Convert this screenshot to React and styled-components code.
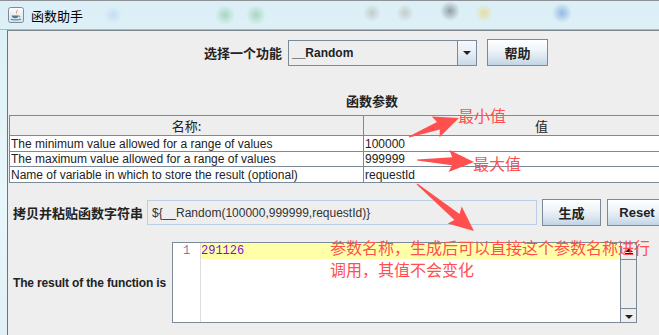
import React from 'react';
import styled, { createGlobalStyle } from 'styled-components';

const GlobalStyle = createGlobalStyle`
  html, body {
    margin: 0;
    padding: 0;
    background: #eeeeee;
  }
  * {
    box-sizing: border-box;
  }
`;

const ui = `"Liberation Sans", "Noto Sans CJK SC", Arial, sans-serif`;
const cjk = `"Noto Sans CJK SC", "Liberation Sans", sans-serif`;
const red = '#ff4f4f';
const lineColor = '#7a8a99';

const Frame = styled.div`
  position: relative;
  width: 659px;
  height: 335px;
  overflow: hidden;
  border-top: 1px solid #8c9296;
  background:
    radial-gradient(circle at 113px 14px, rgba(120, 170, 230, 0.25) 0, transparent 9px),
    radial-gradient(circle at 225px 14px, rgba(60, 170, 90, 0.35) 0, transparent 10px),
    radial-gradient(circle at 256px 14px, rgba(60, 170, 90, 0.35) 0, transparent 10px),
    radial-gradient(circle at 372px 12px, rgba(140, 140, 120, 0.35) 0, transparent 9px),
    radial-gradient(circle at 405px 12px, rgba(150, 140, 120, 0.35) 0, transparent 9px),
    radial-gradient(circle at 450px 10px, rgba(60, 60, 70, 0.45) 0, transparent 10px),
    radial-gradient(circle at 484px 12px, rgba(240, 200, 60, 0.45) 0, transparent 9px),
    radial-gradient(circle at 562px 12px, rgba(60, 120, 210, 0.45) 0, transparent 10px),
    linear-gradient(180deg, #dceff6 0%, #e8f7fb 60%, #e2f0f5 100%);
`;

const TitleBar = styled.div`
  height: 29px;
  display: flex;
  align-items: center;
  gap: 7px;
  padding: 0 0 0 8px;
  border-bottom: 1px solid #a6b8c4;
`;

const TitleText = styled.span`
  font-family: ${cjk};
  font-size: 13px;
  color: #000;
`;

const Body = styled.div`
  margin-left: 7px;
  width: 733px;
  height: 306px;
  background: #eeeeee;
  border-left: 1px solid #6f7478;
  border-top: 1px solid #80898f;
  display: flex;
  flex-direction: column;
`;

const ComboRow = styled.div`
  margin-top: 8px;
  padding-left: 4px;
  display: flex;
  align-items: center;
  justify-content: center;
`;

const BoldLabel = styled.span`
  font-family: ${cjk};
  font-weight: 700;
  font-size: 13px;
  color: #222;
  white-space: nowrap;
  width: ${(p) => (p.$w ? `${p.$w}px` : 'auto')};
`;

const Combo = styled.div`
  margin-left: 6px;
  width: 189px;
  height: 26px;
  display: flex;
  border: 1px solid ${lineColor};
  background: #eeeeee;
`;

const ComboValue = styled.div`
  flex: 1;
  padding-left: 3px;
  display: flex;
  align-items: center;
  font-family: ${ui};
  font-weight: 700;
  font-size: 12px;
  color: #222;
`;

const ComboArrow = styled.div`
  width: 19px;
  display: flex;
  align-items: center;
  justify-content: center;
  border-left: 1px solid ${lineColor};
  background: linear-gradient(180deg, #f6f9fc 0%, #e6eef6 50%, #c9d9e8 100%);
  &::after {
    content: '';
    border-left: 4px solid transparent;
    border-right: 4px solid transparent;
    border-top: 4px solid #222;
  }
`;

const MetalButton = styled.button`
  margin-left: ${(p) => p.$ml || 0}px;
  width: ${(p) => p.$w}px;
  height: 27px;
  flex: none;
  padding: 0;
  border: 1px solid ${lineColor};
  border-radius: 0;
  background: linear-gradient(180deg, #ffffff 0%, #f1f6fa 35%, #dbe6f0 70%, #c3d4e5 100%);
  font-family: ${ui};
  font-weight: 700;
  font-size: 13px;
  color: #222;
`;

const SectionTitle = styled.div`
  margin-top: 27px;
  padding-right: 4px;
  height: 16px;
  line-height: 16px;
  text-align: center;
  font-family: ${cjk};
  font-weight: 700;
  font-size: 13px;
  color: #222;
`;

const ParamGrid = styled.div`
  margin: 6px 0 0 1px;
  width: 710px;
  display: grid;
  grid-template-columns: 354px 356px;
  border-top: 1px solid ${lineColor};
  border-left: 1px solid ${lineColor};
`;

const HeadCell = styled.div`
  height: 20px;
  display: flex;
  align-items: center;
  justify-content: center;
  border-right: 1px solid ${lineColor};
  border-bottom: 1px solid ${lineColor};
  background: #eeeeee;
  font-family: ${cjk};
  font-size: 13px;
  color: #222;
`;

const Cell = styled.div`
  height: ${(p) => p.$h || 16}px;
  padding-left: 1px;
  display: flex;
  align-items: center;
  border-right: 1px solid ${lineColor};
  border-bottom: 1px solid ${lineColor};
  background: #ffffff;
  font-family: ${ui};
  font-size: 12px;
  color: #222;
  white-space: nowrap;
  overflow: hidden;
`;

const FormRow = styled.div`
  margin-top: ${(p) => p.$mt}px;
  padding-left: 5px;
  display: flex;
  align-items: center;
`;

const EnLabel = styled.span`
  font-family: ${ui};
  font-weight: 700;
  font-size: 12px;
  letter-spacing: -0.15px;
  color: #222;
  white-space: nowrap;
  width: 153px;
`;

const FuncField = styled.div`
  margin-left: 5px;
  width: 390px;
  height: 25px;
  padding-left: 4px;
  display: flex;
  align-items: center;
  border: 1px solid #b8cfe5;
  background: #eeeeee;
  font-family: ${ui};
  font-size: 12px;
  color: #333;
`;

const ResultBox = styled.div`
  margin-left: 6px;
  width: 465px;
  height: 81px;
  display: flex;
  border: 1px solid ${lineColor};
  background: #ffffff;
`;

const Gutter = styled.div`
  width: 28px;
  padding-top: 1px;
  border-right: 1px solid #dddddd;
  text-align: center;
  font-family: "Liberation Mono", monospace;
  font-size: 12px;
  line-height: 15px;
  color: #8a7a9a;
`;

const Editor = styled.div`
  flex: 1;
`;

const CurrentLine = styled.div`
  height: 16px;
  line-height: 16px;
  background: #ffffaa;
  font-family: "Liberation Mono", monospace;
  font-size: 12px;
  color: #7a12d4;
`;

const ScrollBar = styled.div`
  width: 16px;
  display: flex;
  flex-direction: column;
  border-left: 1px solid ${lineColor};
  background: #eeeeee;
`;

const ScrollTrack = styled.div`
  flex: 1;
  border-top: 1px solid ${lineColor};
  border-bottom: 1px solid ${lineColor};
`;

const ScrollButton = styled.div`
  height: ${(p) => p.$h}px;
  display: flex;
  flex-direction: column;
  align-items: center;
  justify-content: center;
  gap: 1px;
  background: #eeeeee;
  &::before {
    content: '';
    order: ${(p) => (p.$down ? 0 : 1)};
    width: 8px;
    height: 1px;
    background: ${(p) => (p.$down ? 'transparent' : '#222')};
  }
  &::after {
    content: '';
    order: ${(p) => (p.$down ? 1 : 0)};
    border-left: 4px solid transparent;
    border-right: 4px solid transparent;
    ${(p) => (p.$down ? 'border-top: 4px solid #222;' : 'border-bottom: 4px solid #222;')}
  }
`;

const Overlay = styled.svg`
  position: absolute;
  left: 0;
  top: 0;
  pointer-events: none;
`;

const Note = styled.div`
  position: absolute;
  left: ${(p) => p.$x}px;
  top: ${(p) => p.$y}px;
  width: ${(p) => (p.$w ? `${p.$w}px` : 'auto')};
  font-family: ${cjk};
  font-size: 16px;
  line-height: ${(p) => p.$lh || 20}px;
  color: ${red};
  white-space: ${(p) => (p.$w ? 'normal' : 'nowrap')};
`;

const JavaIcon = () => (
  <svg width="16" height="16" viewBox="0 0 16 16">
    <defs>
      <linearGradient id="jbg" x1="0" y1="0" x2="0" y2="1">
        <stop offset="0" stopColor="#fbfcfd" />
        <stop offset="1" stopColor="#d9e2e8" />
      </linearGradient>
    </defs>
    <rect x="0.5" y="0.5" width="15" height="15" rx="2" fill="url(#jbg)" stroke="#7d8b96" />
    <path d="M8.6 2.2c1.6 1.4-1.4 2.4-.4 3.8.3.5 1 .9.5 1.6.9-.9-.3-1.4-.2-2.2.1-1 2.1-1.6.1-3.2z" fill="#e2531f" />
    <path d="M3.6 8.6h7.2c0 1.6-1.6 2.6-3.6 2.6S3.6 10.2 3.6 8.6z" fill="#4d7a9a" />
    <path d="M10.6 8.9c1.3-.2 1.7.9.4 1.5" fill="none" stroke="#4d7a9a" strokeWidth="0.8" />
    <path d="M2.8 12.3c2.6.9 7.4.9 10.2-.2" fill="none" stroke="#4d7a9a" strokeWidth="1" />
  </svg>
);

const arrowPoints = (x1, y1, x2, y2, head = 22, half = 11, shaft = 4) => {
  const dx = x2 - x1;
  const dy = y2 - y1;
  const len = Math.hypot(dx, dy);
  const ux = dx / len;
  const uy = dy / len;
  const nx = -uy;
  const ny = ux;
  const bx = x2 - ux * head;
  const by = y2 - uy * head;
  const p = (x, y) => `${x.toFixed(1)},${y.toFixed(1)}`;
  return [
    p(x1 + nx * 0.6, y1 + ny * 0.6),
    p(bx + nx * shaft, by + ny * shaft),
    p(bx + nx * half - ux * 3, by + ny * half - uy * 3),
    p(x2, y2),
    p(bx - nx * half - ux * 3, by - ny * half - uy * 3),
    p(bx - nx * shaft, by - ny * shaft),
    p(x1 - nx * 0.6, y1 - ny * 0.6),
  ].join(' ');
};

const arrows = [
  [409, 136, 459, 117],
  [417, 159, 474, 161],
  [417, 183, 474, 230],
];

const params = [
  ['The minimum value allowed for a range of values', '100000', 16],
  ['The maximum value allowed for a range of values', '999999', 15],
  ['Name of variable in which to store the result (optional)', 'requestId', 16],
];

export default function App() {
  return (
    <>
      <GlobalStyle />
      <Frame>
        <TitleBar>
          <JavaIcon />
          <TitleText>函数助手</TitleText>
        </TitleBar>
        <Body>
          <ComboRow>
            <BoldLabel>选择一个功能</BoldLabel>
            <Combo>
              <ComboValue>__Random</ComboValue>
              <ComboArrow />
            </Combo>
            <MetalButton $ml={10} $w={61}>帮助</MetalButton>
          </ComboRow>

          <SectionTitle>函数参数</SectionTitle>

          <ParamGrid>
            <HeadCell>名称:</HeadCell>
            <HeadCell>值</HeadCell>
            {params.map(([name, value, h]) => (
              <React.Fragment key={name}>
                <Cell $h={h}>{name}</Cell>
                <Cell $h={h}>{value}</Cell>
              </React.Fragment>
            ))}
          </ParamGrid>

          <FormRow $mt={16}>
            <BoldLabel $w={129}>拷贝并粘贴函数字符串</BoldLabel>
            <FuncField>{'${__Random(100000,999999,requestId)}'}</FuncField>
            <MetalButton $ml={5} $w={59}>生成</MetalButton>
            <MetalButton $ml={6} $w={60}>Reset</MetalButton>
          </FormRow>

          <FormRow $mt={16}>
            <EnLabel>The result of the function is</EnLabel>
            <ResultBox>
              <Gutter>1</Gutter>
              <Editor>
                <CurrentLine>291126</CurrentLine>
              </Editor>
              <ScrollBar>
                <ScrollButton $h={16} />
                <ScrollTrack />
                <ScrollButton $h={13} $down />
              </ScrollBar>
            </ResultBox>
          </FormRow>
        </Body>

        <Overlay width="659" height="335">
          {arrows.map(([x1, y1, x2, y2]) => (
            <polygon key={`${x1}-${y1}`} points={arrowPoints(x1, y1, x2, y2)} fill={red} />
          ))}
        </Overlay>
        <Note $x={458} $y={104}>最小值</Note>
        <Note $x={473} $y={152}>最大值</Note>
        <Note $x={330} $y={235} $w={324} $lh={22}>
          参数名称，生成后可以直接这个参数名称进行调用，其值不会变化
        </Note>
      </Frame>
    </>
  );
}
